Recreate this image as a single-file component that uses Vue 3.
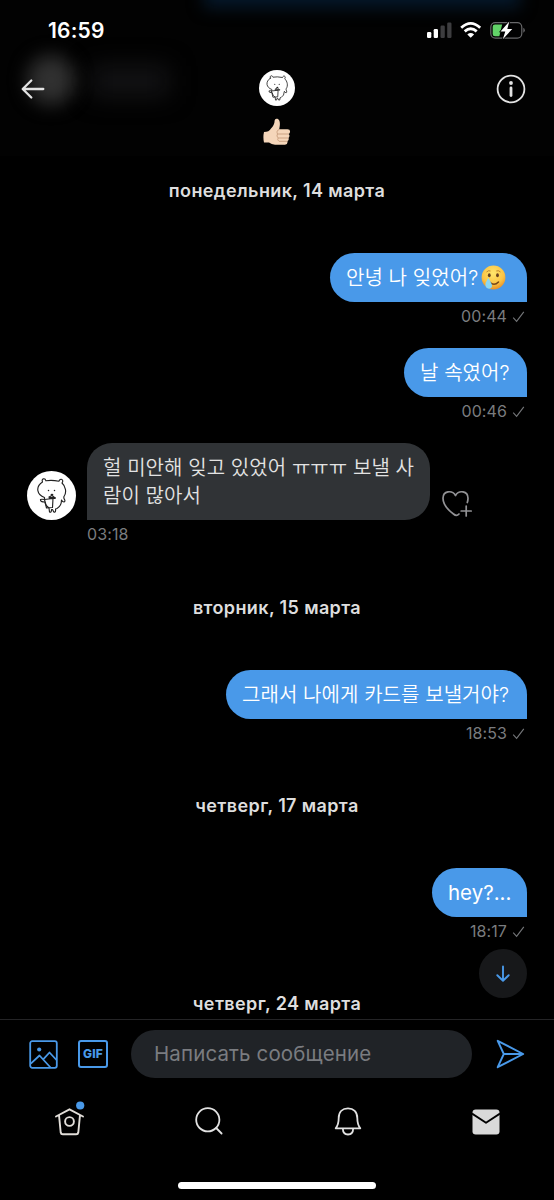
<script setup>
const thread = [
  { kind: 'date', id: 'd1', text: 'понедельник, 14 марта' },
  { kind: 'sent', id: 'm1', text: '안녕 나 잊었어?', time: '00:44', width: 197, emoji: true },
  { kind: 'sent', id: 'm2', text: '날 속였어?', time: '00:46', width: 123 },
  { kind: 'received', id: 'm3', lines: ['헐 미안해 잊고 있었어 ㅠㅠㅠ 보낼 사', '람이 많아서'], time: '03:18' },
  { kind: 'date', id: 'd2', text: 'вторник, 15 марта' },
  { kind: 'sent', id: 'm4', text: '그래서 나에게 카드를 보낼거야?', time: '18:53', width: 301 },
  { kind: 'date', id: 'd3', text: 'четверг, 17 марта' },
  { kind: 'sent', id: 'm5', text: 'hey?...', time: '18:17', width: 95 },
  { kind: 'date', id: 'd4', text: 'четверг, 24 марта' }
]
</script>

<template>
  <div class="phone">
    <svg width="0" height="0" class="defs">
      <symbol id="bear" viewBox="0 0 49 49">
        <circle cx="24.500" cy="24.500" r="24.500" fill="#fff" />
        <g fill="none" stroke="#222" stroke-width="1.150" stroke-linecap="round" stroke-linejoin="round">
          <path d="M15.500 11C14 7.500 18 6.500 19 9.800Q24.500 8.700 32 10.200C33 6.500 37.500 8.500 35 12C38.500 15 40 21.500 37 25.500Q36.500 27 37.500 28.500Q38.500 30.500 37 31Q35.500 31 34.500 29Q34.500 35 30 37.500L28.500 38Q29 42 26.800 41L25.500 38.500L24.500 38.500Q24.500 42 22.500 41L22 37Q18.500 35 18 31Q13 31 13.500 28.500Q14.500 28 17.500 28.500V26.500C10 24 8 16 15.500 11Z" />
          <path d="M17.500 28.500L26 27.500L25.500 36.500L19.500 37ZM22 26L25 24.500L27.500 26.500" />
          <path d="M22.500 27H28" stroke-width="1.800" />
        </g>
        <g fill="#222"><circle cx="21.500" cy="19.500" r=".75" /><circle cx="27.500" cy="19.500" r=".75" /><ellipse cx="25" cy="23.700" rx="1.400" ry=".9" /></g>
      </symbol>
    </svg>

    <header class="top">
      <div class="blur-avatar"></div>
      <div class="blur-name"></div>
      <div class="blur-blue"></div>
      <div class="status">
        <span class="clock">16:59</span>
        <svg class="status-icons" width="100" height="20" viewBox="0 0 100 20">
          <g fill="#fff">
            <rect x="1" y="12" width="4.300" height="6" rx="1.200" />
            <rect x="7.700" y="9" width="4.300" height="9" rx="1.200" />
            <g fill="#3d3d3f"><rect x="14.500" y="5.500" width="4.300" height="12.500" rx="1.200" /><rect x="21.200" y="2.500" width="4.300" height="15.500" rx="1.200" /></g>
          </g>
          <g fill="none" stroke="#fff" stroke-width="2.800">
            <path d="M35.200 7.700Q44.700-.9 54.200 7.700" />
            <path d="M38.700 11.400Q44.700 6 50.700 11.400" />
          </g>
          <path d="M41.300 14.400Q44.700 11.700 48.100 14.400L44.700 17.800Z" fill="#fff" />
          <rect x="64.800" y="2.700" width="31" height="15.400" rx="4.500" fill="none" stroke="#68686a" stroke-width="1.200" />
          <path d="M97.300 7.800Q98.800 8.500 98.800 10.300T97.300 12.800Z" fill="#68686a" />
          <path d="M69 4.500H76.200L73.300 16.300H69Q66.700 16.300 66.700 14V6.800Q66.700 4.500 69 4.500Z" fill="#62d368" />
          <path d="M83.300 1.500L74.500 11.500H79.300L76.800 19.300L86.300 8.900H81.300Z" fill="#fff" stroke="#000" stroke-width="1.500" paint-order="stroke" />
        </svg>
      </div>
      <div class="nav">
        <svg width="24" height="22" viewBox="0 0 24 22" fill="none" stroke="#e3e3e3" stroke-width="2.300" stroke-linecap="round" stroke-linejoin="round"><path d="M10.300 2.500L1.700 11L10.300 19.500M2 11H22.300" /></svg>
        <div class="profile">
          <svg class="small-bear"><use href="#bear" /></svg>
          <svg width="28" height="28" viewBox="0 0 28 28" class="thumb">
            <path d="M1 14Q6 14 8 10.500Q11.500 7 11.700 2.200Q12 .2 14.500.8Q18.200 2.500 16.200 11.200H24.500Q27.500 11.200 27 14Q27 15.500 25.500 16Q27.500 17.500 25.500 20Q26.300 22 24.500 23Q25 26.300 22 26.700H12Q8.500 26.500 6 24.500H1Q-.2 19 1 14Z" fill="#f5d6ba" />
            <path d="M16.200 11.500Q13 12.500 14.500 16H25.500M14.500 16Q13 18 15.200 20H25M15.200 20Q13.800 22 16 23.300H24" fill="none" stroke="#c79d7d" stroke-width=".9" />
          </svg>
        </div>
        <svg width="30" height="30" viewBox="0 0 30 30"><circle cx="15" cy="15" r="13.400" fill="none" stroke="#e3e3e3" stroke-width="1.800" /><circle cx="15" cy="9" r="1.900" fill="#e3e3e3" /><path d="M15 14V21.500" stroke="#e3e3e3" stroke-width="2.800" stroke-linecap="round" /></svg>
      </div>
    </header>

    <main class="thread">
      <template v-for="item in thread" :key="item.id">
        <h2 v-if="item.kind === 'date'" class="date">{{ item.text }}</h2>
        <div v-else-if="item.kind === 'sent'" class="sent">
          <div class="bubble" :style="{ width: item.width + 'px' }">
            <span :class="item.id === 'm5' ? 'latin' : 'hangul'">{{ item.text }}</span>
            <svg v-if="item.emoji" class="emoji" width="25" height="25" viewBox="0 0 25 25">
              <defs><radialGradient id="face" cx=".48" cy=".32" r=".7"><stop offset="0" stop-color="#ffe66c" /><stop offset=".65" stop-color="#fbc344" /><stop offset="1" stop-color="#e68c25" /></radialGradient></defs>
              <circle cx="12.500" cy="12.500" r="11.900" fill="url(#face)" />
              <ellipse cx="8.300" cy="10.300" rx="1.400" ry="2" fill="#68401d" /><ellipse cx="16.500" cy="10.300" rx="1.400" ry="2" fill="#68401d" />
              <path d="M5.500 7Q7.500 5 9.500 6M15.300 6Q17.500 5 19.500 7" fill="none" stroke="#ae7224" stroke-width=".8" />
              <path d="M8.500 17Q13 21.500 17.500 17" fill="none" stroke="#754518" stroke-width="1.500" stroke-linecap="round" />
              <path d="M7.400 13Q3.800 18 4.500 21Q5.200 23.700 8 23.700T11 20.500Q10.500 18 7.400 13Z" fill="#88d7f6" />
            </svg>
          </div>
          <div class="meta">{{ item.time }}<svg width="13" height="13" viewBox="0 0 13 13" fill="none" stroke="#747679" stroke-width="1.100"><path d="M1.200 7.700L4.600 11.300L11.800 1.800" /></svg></div>
        </div>
        <div v-else class="received">
          <svg class="bear"><use href="#bear" /></svg>
          <div class="bubble gray"><div v-for="line in item.lines" :key="line">{{ line }}</div></div>
          <svg class="heart" width="32" height="30" viewBox="0 0 32 30" fill="none" stroke="#929295" stroke-width="1.700" stroke-linecap="round" stroke-linejoin="round"><path d="M18 25Q15.500 27.700 12.500 25C7 21 2 15 2 9.300C2 2 11 .5 14.500 6.500C18 .5 27 2 27 9.300Q27 11.500 26.300 13.500M25.200 17V27M20.200 22H30.200" /></svg>
          <div class="meta received-time">{{ item.time }}</div>
        </div>
      </template>
      <button class="jump" aria-label="↓"><svg width="16" height="18" viewBox="0 0 16 18" fill="none" stroke="#4999e9" stroke-width="1.900" stroke-linecap="round" stroke-linejoin="round"><path d="M8 1.500V15.500M2.300 10.200L8 15.800L13.700 10.200" /></svg></button>
    </main>

    <footer>
      <div class="composer">
        <svg width="29" height="29" viewBox="0 0 29 29" fill="none" stroke="#4999e9" stroke-width="1.800" stroke-linejoin="round"><rect x="1.200" y="1.200" width="26.600" height="26.600" rx="2" /><path d="M1.800 23.700L10.500 15.500L21.500 27.500M14.200 19.300L20.500 12.500L27.500 20" /><circle cx="10.200" cy="9.500" r="2.100" fill="#4999e9" stroke="none" /></svg>
        <div class="gif">GIF</div>
        <div class="input">Написать сообщение</div>
        <svg class="send" width="29" height="30" viewBox="0 0 29 30" fill="none" stroke="#4999e9" stroke-width="1.900" stroke-linejoin="round"><path d="M1.700 1.800L27.200 15L1.700 28.200L7.800 15ZM7.800 15H27" /></svg>
      </div>
      <nav class="tabs">
        <svg width="32" height="36" viewBox="0 0 32 36"><g fill="none" stroke="#e2ded9" stroke-width="1.900" stroke-linecap="round" stroke-linejoin="round"><path d="M2 16.500L15.500 9.300L29 16.500M5 15L6.700 32.500Q7 34.300 8.800 34.300H22.200Q24 34.300 24.300 32.500L26 15" /><circle cx="15.500" cy="21.500" r="4.400" /></g><circle cx="26.200" cy="5.500" r="4.100" fill="#4999e9" /></svg>
        <svg width="28" height="29" viewBox="0 0 28 29" fill="none" stroke="#e2e2e2" stroke-width="1.800" stroke-linecap="round"><circle cx="12.800" cy="12.800" r="11.600" /><path d="M21.200 21L26.600 26.500" /></svg>
        <svg width="28" height="29" viewBox="0 0 28 29" fill="none" stroke="#e2e2e2" stroke-width="1.800" stroke-linecap="round" stroke-linejoin="round"><path d="M1.700 21.300H26.300Q23.300 17.500 23.300 11C23.300 4.800 19.500 1.300 14 1.300S4.700 4.800 4.700 11Q4.700 17.500 1.700 21.300ZM8.800 21.500Q9 27.500 14 27.500T19.200 21.500" /></svg>
        <svg width="28" height="26" viewBox="0 0 28 26"><rect x=".5" y=".5" width="27" height="25" rx="3.200" fill="#d9d9d9" /><path d="M0 4.500L14 13.800L28 4.500" fill="none" stroke="#000" stroke-width="1.900" stroke-linejoin="round" /></svg>
      </nav>
      <div class="home-indicator"></div>
    </footer>
  </div>
</template>

<style>
body { background: #000; }
</style>

<style scoped>
* { box-sizing: border-box; }
.phone { width: 554px; height: 1200px; overflow: hidden; display: flex; flex-direction: column; background: #000; color: #fff; font-family: Inter, "Noto Sans CJK KR", sans-serif; }
svg { flex: none; display: block; }
.defs { position: absolute; }
.top { height: 156px; flex: none; position: relative; background: #020202; overflow: hidden; }
.blur-avatar { position: absolute; left: 27px; top: 55px; width: 48px; height: 50px; border-radius: 50%; background: #303030; filter: blur(9px); }
.blur-name { position: absolute; left: 91px; top: 66px; width: 78px; height: 30px; background: #131315; filter: blur(12px); }
.blur-blue { position: absolute; left: 204px; top: -24px; width: 316px; height: 32px; background: #05182a; filter: blur(8px); }
.status { position: relative; display: flex; justify-content: space-between; height: 60px; padding: 20px 28px 0 48px; }
.clock { font-size: 21px; line-height: 22px; font-weight: 600; letter-spacing: .2px; }
.nav { position: relative; display: flex; justify-content: space-between; padding: 10px 28px 0 21px; }
.nav > svg:first-child { margin-top: 8px; }
.nav > svg:last-child { margin-top: 4px; }
.profile { display: flex; flex-direction: column; align-items: center; margin-left: 13px; }
.small-bear { width: 36px; height: 36px; }
.thumb { margin-top: 12px; }
.thread { position: relative; height: 863px; flex: none; overflow: hidden; padding: 23px 27px 0; }
.date { margin: 0 0 50px; text-align: center; font-size: 18px; line-height: 24px; font-weight: 600; color: #dedede; letter-spacing: .38px; }
.sent { display: flex; flex-direction: column; align-items: flex-end; margin-bottom: 22px; }
.received + .date { margin-top: 52px; }
.sent:has(+ .date) { margin-bottom: 51px; }
.bubble { display: flex; height: 49px; align-items: center; padding: 0 16px; border-radius: 25px 25px 0 25px; background: #4999e9; font-size: 20px; line-height: 27.500px; white-space: nowrap; font-weight: 350; }
.hangul { padding-top: 2px; letter-spacing: .06px; }
.latin { font-size: 20.500px; font-weight: 400; }
.emoji { margin-left: 3px; }
.meta { display: flex; align-items: center; height: 20px; margin-top: 4px; font-size: 16px; letter-spacing: .1px; color: #7a7c7f; font-weight: 400; }
.sent .meta svg { margin: 0 2px 0 5px; }
.received { display: grid; grid-template-columns: 60px 343px 1fr; align-items: end; }
.bear { width: 49px; height: 49px; }
.gray { display: block; height: 77px; padding-top: 12px; border-radius: 25px 25px 25px 0; background: #303336; color: #e3e3e3; letter-spacing: .06px; }
.heart { margin: 0 0 1px 11px; }
.received-time { grid-column: 2; }
.jump { position: absolute; right: 27px; bottom: 21px; width: 48px; height: 49px; padding: 0; border: 0; border-radius: 50%; background: #17181a; display: flex; align-items: center; justify-content: center; }
footer { height: 181px; flex: none; border-top: 1px solid #242426; background: #000; }
.composer { height: 68px; padding: 0 29px; display: flex; align-items: center; }
.gif { width: 30px; height: 28px; margin-left: 20px; display: flex; align-items: center; justify-content: center; border: 2px solid #4999e9; border-radius: 3px; color: #4999e9; font-size: 12px; line-height: 12px; font-weight: 800; letter-spacing: .2px; }
.input { width: 341px; height: 48px; margin-left: 23px; padding-left: 23px; border-radius: 24px; background: #202327; color: #7a7c80; font-size: 20.500px; line-height: 48px; letter-spacing: .13px; }
.send { margin-left: 24px; }
.tabs { display: flex; height: 73px; justify-content: space-between; padding: 12px 54px 0; }
.tabs svg:nth-child(2) { margin: 7px 1px 0 -1px; }
.tabs svg:nth-child(3) { margin: 7px 0 0; }
.tabs svg:nth-child(4) { margin: 9px 0 0; }
.home-indicator { width: 198px; height: 7px; margin: 21px auto 0; border-radius: 4px; background: #fff; }
</style>
